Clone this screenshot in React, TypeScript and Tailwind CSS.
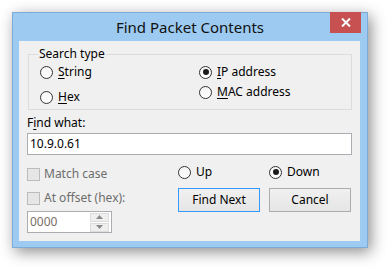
import React from 'react';

const font = { fontFamily: '"Noto Sans", "Open Sans", sans-serif' };

function Radio({ checked, label, ul }: { checked?: boolean; label: string; ul?: number }) {
  return (
    <div className="flex items-center h-[16px]">
      <span className="w-[13px] h-[13px] rounded-full border border-[#333333] bg-gradient-to-b from-[#f4f4f4] to-[#ffffff] flex items-center justify-center shrink-0">
        {checked && <span className="w-[6px] h-[6px] rounded-full bg-[#1a1a1a]" />}
      </span>
      <span className="ml-[5px] text-[12px] leading-[16px] text-black whitespace-nowrap">
        {ul === undefined ? (
          label
        ) : (
          <>
            {label.slice(0, ul)}
            <span className="underline underline-offset-2">{label[ul]}</span>
            {label.slice(ul + 1)}
          </>
        )}
      </span>
    </div>
  );
}

function Check({ label }: { label: string }) {
  return (
    <div className="flex items-center h-[16px]">
      <span className="w-[13px] h-[13px] border border-[#bcbcbc] bg-[#e6e6e6] shrink-0" />
      <span className="ml-[4px] text-[12px] leading-[16px] text-[#6d6d6d] whitespace-nowrap">{label}</span>
    </div>
  );
}

export default function App() {
  return (
    <div className="w-[388px] h-[269px] bg-white pl-[12px] pt-[12px]" style={font}>
      <div className="relative w-[356px] h-[236px] bg-[#9ccaf0] border border-[#7eaad8] shadow-[3px_4px_14px_rgba(0,0,0,0.45)] flex flex-col">
        {/* title bar */}
        <div className="h-[28px] flex items-center justify-center">
          <span className="text-[15px] leading-[20px] text-[#111111]">Find Packet Contents</span>
        </div>
        <div className="absolute top-[-1px] right-[6px] w-[31px] h-[21px] bg-[#c75050] flex items-center justify-center">
          <svg width="10" height="9" viewBox="0 0 10 9">
            <path d="M1 0.5 L9 8.5 M9 0.5 L1 8.5" stroke="white" strokeWidth="2" />
          </svg>
        </div>

        {/* client area */}
        <div className="ml-[6px] w-[341px] h-[200px] bg-[#f0f0f0] px-[8px] flex flex-col">
          <div className="ml-[1px] mt-[13px] w-[324px] h-[56px] border border-[#dcdcdc] flex flex-col">
            <span className="-mt-[9px] ml-[9px] px-[1px] w-fit bg-[#f0f0f0] text-[12px] leading-[16px] text-black">
              Search type
            </span>
            <div className="flex pl-[11px] mt-[2px]">
              <div className="w-[159px] flex flex-col gap-[9px]">
                <Radio label="String" ul={0} />
                <Radio label="Hex" ul={0} />
              </div>
              <div className="flex flex-col gap-[4px]">
                <Radio label="IP address" ul={0} checked />
                <Radio label="MAC address" ul={0} />
              </div>
            </div>
          </div>

          <div className="mt-[5px] h-[16px] text-[12px] leading-[16px] text-black">
            F<span className="underline underline-offset-2">i</span>nd what:
          </div>
          <div className="mt-[2px] w-[325px] h-[22px] bg-white border border-[#abadb3] flex items-center pl-[2px] text-[12px] text-black">
            10.9.0.61
          </div>

          <div className="flex">
            <div className="w-[151px] flex flex-col">
              <div className="mt-[11px]">
                <Check label="Match case" />
              </div>
              <div className="mt-[8px]">
                <Check label="At offset (hex):" />
              </div>
              <div className="mt-[5px] w-[85px] h-[22px] bg-white border border-[#abadb3] flex items-center">
                <span className="pl-[2px] flex-1 text-[12px] text-[#7a6f66]">0000</span>
                <div className="w-[19px] mr-[2px] flex flex-col gap-[1px]">
                  <div className="h-[9px] bg-[#efefef] border border-[#dcdcdc] flex items-center justify-center">
                    <svg width="7" height="4" viewBox="0 0 7 4"><path d="M0 4 L3.5 0 L7 4 Z" fill="#8a8a8a" /></svg>
                  </div>
                  <div className="h-[9px] bg-[#efefef] border border-[#dcdcdc] flex items-center justify-center">
                    <svg width="7" height="4" viewBox="0 0 7 4"><path d="M0 0 L3.5 4 L7 0 Z" fill="#8a8a8a" /></svg>
                  </div>
                </div>
              </div>
            </div>

            <div className="flex flex-col">
              <div className="mt-[9px] flex">
                <div className="w-[91px]">
                  <Radio label="Up" />
                </div>
                <Radio label="Down" checked />
              </div>
              <div className="mt-[8px] flex gap-[9px]">
                <button className="w-[82px] h-[24px] border border-[#3399ff] bg-gradient-to-b from-[#f0f0f0] to-[#e5e5e5] text-[12px] text-black">
                  Find Next
                </button>
                <button className="w-[82px] h-[24px] border border-[#acacac] bg-gradient-to-b from-[#f0f0f0] to-[#e5e5e5] text-[12px] text-black">
                  Cancel
                </button>
              </div>
            </div>
          </div>
        </div>
      </div>
    </div>
  );
}
